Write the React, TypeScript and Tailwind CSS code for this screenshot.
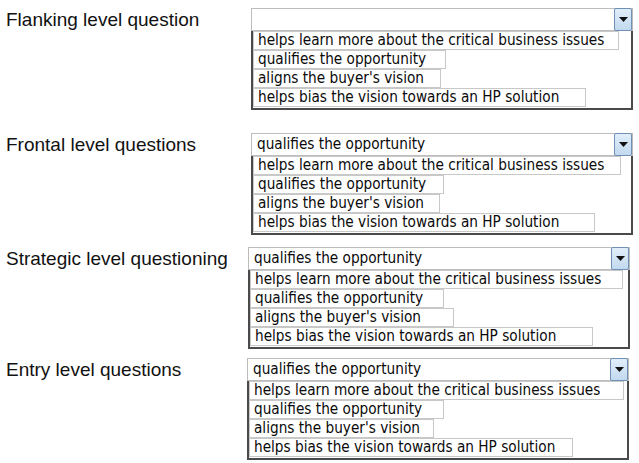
import React from "react";

const OPTIONS = [
  "helps learn more about the critical business issues",
  "qualifies the opportunity",
  "aligns the buyer's vision",
  "helps bias the vision towards an HP solution",
];

type Row = {
  label: string;
  value: string;
  rowClass: string;
  boxClass: string;
  widths: number[];
};

const ROWS: Row[] = [
  {
    label: "Flanking level question",
    value: "",
    rowClass: "mt-[8px]",
    boxClass: "ml-[251px] w-[382px]",
    widths: [366, 193, 188, 333],
  },
  {
    label: "Frontal level questions",
    value: "qualifies the opportunity",
    rowClass: "mt-[23px]",
    boxClass: "ml-[251px] w-[382px]",
    widths: [368, 191, 187, 342],
  },
  {
    label: "Strategic level questioning",
    value: "qualifies the opportunity",
    rowClass: "mt-[12px]",
    boxClass: "ml-[248px] w-[382px]",
    widths: [373, 194, 204, 343],
  },
  {
    label: "Entry level questions",
    value: "qualifies the opportunity",
    rowClass: "mt-[9px]",
    boxClass: "ml-[247px] w-[382px]",
    widths: [375, 195, 185, 324],
  },
];

function Arrow() {
  return (
    <div className="flex h-[23px] w-[18px] items-center justify-center rounded-[2px] border border-[#6f91b8] bg-gradient-to-b from-[#e2eefa] to-[#c2d9ef]">
      <svg width="9" height="5" viewBox="0 0 9 5">
        <path d="M0 0h9L4.5 5z" fill="#111" />
      </svg>
    </div>
  );
}

function Dropdown({ row }: { row: Row }) {
  return (
    <div className={`${row.boxClass} flex flex-col`}>
      <div className="flex h-[23px] items-center justify-between border border-[#bcbcbc] bg-white pl-[5px] pr-0">
        <span className="text-[15.2px] leading-none text-[#0a0a0a]">{row.value}</span>
        <Arrow />
      </div>
      <div className="flex flex-col border-b-2 border-l-2 border-r-2 border-[#4a4a4a] bg-white pb-[1px]">
        {OPTIONS.map((o, i) => (
          <div
            key={o}
            className="flex h-[19px] items-center whitespace-nowrap border border-[#c8c8c8] pl-[4px] text-[15.2px] leading-none text-[#0a0a0a]"
            style={{ width: row.widths[i] }}
          >
            {o}
          </div>
        ))}
      </div>
    </div>
  );
}

export default function App() {
  return (
    <div className="relative h-[463px] w-[639px] overflow-hidden bg-white">
      {ROWS.map((row) => (
        <div key={row.label} className={`${row.rowClass} relative`}>
          <div
            className="absolute left-[6px] top-[1px] flex h-[23px] items-center text-[19px] text-[#111]"
            style={{ fontFamily: '"Liberation Sans", Arial, sans-serif' }}
          >
            {row.label}
          </div>
          <div style={{ fontFamily: '"DejaVu Sans Condensed", "DejaVu Sans", sans-serif' }}>
            <Dropdown row={row} />
          </div>
        </div>
      ))}
    </div>
  );
}
